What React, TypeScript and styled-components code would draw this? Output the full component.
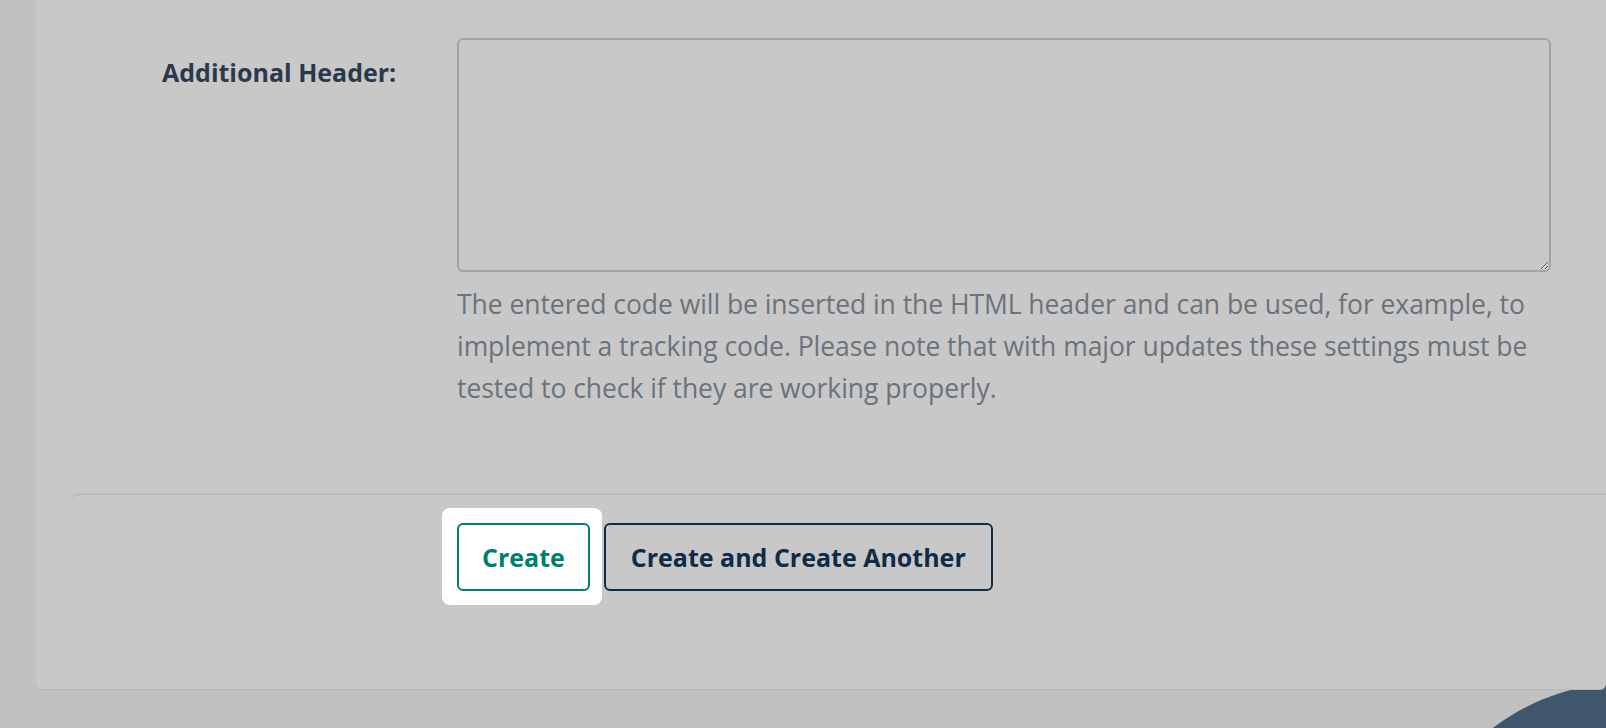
import React from "react";
import styled, { createGlobalStyle } from "styled-components";

const GlobalStyle = createGlobalStyle`
  html, body {
    margin: 0;
    padding: 0;
    background: #c0c1c0;
    font-family: "Open Sans", "Liberation Sans", sans-serif;
    overflow: hidden;
  }
  * { box-sizing: border-box; }
`;

const Page = styled.div`
  position: relative;
  width: 1606px;
  height: 728px;
  overflow: hidden;
  padding-left: 36px;
`;

const Bubble = styled.div`
  position: absolute;
  left: 1402px;
  top: 682px;
  width: 456px;
  height: 456px;
  border-radius: 50%;
  background: #40576b;
  z-index: 0;
`;

const Card = styled.div`
  position: relative;
  z-index: 1;
  height: 689px;
  background: #c8c8c8;
  border-radius: 0 0 6px 6px;
  box-shadow: 0 1px 0 #b6b7b6;
  display: flex;
  flex-direction: column;
`;

const FormBody = styled.div`
  padding: 38px 55px 0 0;
`;

const Row = styled.div`
  display: grid;
  grid-template-columns: 421px 1fr;
`;

const Label = styled.label`
  padding: 19px 0 0 126px;
  font-size: 25px;
  line-height: 30px;
  font-weight: 700;
  color: #2b394c;
`;

const Field = styled.div`
  display: flex;
  flex-direction: column;
`;

const TextArea = styled.textarea`
  display: block;
  width: 100%;
  height: 234px;
  border: 2px solid #a1a4a7;
  border-radius: 6px;
  background: transparent;
  resize: vertical;
  font-family: inherit;
  outline: none;
`;

const Help = styled.p`
  margin: 11px 0 0;
  font-size: 26.5px;
  letter-spacing: -0.05px;
  line-height: 42px;
  color: #6b737c;
  white-space: nowrap;
`;

const Footer = styled.div`
  margin: 84px 0 0 36px;
  border-top: 2px solid #b9b9b9;
  border-top-left-radius: 8px;
  padding: 28px 0 0 385px;
  display: flex;
  align-items: flex-start;
  gap: 14px;
`;

const Highlight = styled.div`
  background: #ffffff;
  border-radius: 8px;
  padding: 15px 12px 14px 15px;
  margin: -15px -12px -14px -15px;
  display: flex;
`;

const Button = styled.button<{ $tone: "teal" | "navy"; $filled?: boolean }>`
  height: 68px;
  padding: 0 ${(p) => (p.$tone === "teal" ? 23 : 25)}px;
  border-radius: 6px;
  border: 2px solid ${(p) => (p.$tone === "teal" ? "#007f6d" : "#0e2c47")};
  color: ${(p) => (p.$tone === "teal" ? "#007f6d" : "#0e2c47")};
  background: ${(p) => (p.$filled ? "#ffffff" : "transparent")};
  font-family: inherit;
  font-size: 25px;
  font-weight: 700;
  cursor: pointer;
`;

export default function App() {
  return (
    <>
      <GlobalStyle />
      <Page>
        <Bubble />
        <Card>
          <FormBody>
            <Row>
              <Label htmlFor="additional-header">Additional Header:</Label>
              <Field>
                <TextArea id="additional-header" />
                <Help>
                  The entered code will be inserted in the HTML header and can be used, for example, to
                  <br />
                  implement a tracking code. Please note that with major updates these settings must be
                  <br />
                  tested to check if they are working properly.
                </Help>
              </Field>
            </Row>
          </FormBody>
          <Footer>
            <Highlight>
              <Button $tone="teal" $filled>
                Create
              </Button>
            </Highlight>
            <Button $tone="navy">Create and Create Another</Button>
          </Footer>
        </Card>
      </Page>
    </>
  );
}
